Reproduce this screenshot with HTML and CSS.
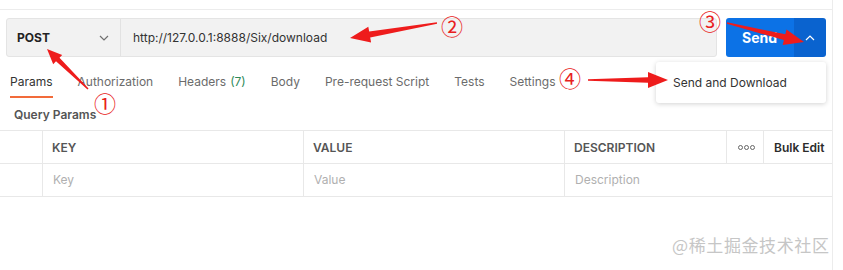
FILE: index.html
```html
<!DOCTYPE html>
<html lang="en">
<head>
    <meta charset="UTF-8">
    <title>Request</title>
    <link rel="stylesheet" href="styles.css">
</head>
<body>

    <div class="pane">
        <!-- top strip -->
        <div class="top-strip"></div>

        <!-- request bar -->
        <div class="request-bar">
            <div class="url-group">
                <div class="method">
                    <span>POST</span>
                    <svg class="chev" width="10" height="6" viewBox="0 0 10 6"><path d="M1 1 L5 5 L9 1" fill="none" stroke="#707070" stroke-width="1.2"/></svg>
                </div>
                <div class="url">http://127.0.0.1:8888/Six/download</div>
            </div>
            <div class="send">
                <span class="send-main">Send</span>
                <span class="send-more">
                    <svg width="10" height="6" viewBox="0 0 10 6"><path d="M1 5 L5 1 L9 5" fill="none" stroke="#fff" stroke-width="1.2"/></svg>
                </span>
            </div>
        </div>

        <!-- tabs -->
        <div class="tabs">
            <span class="tab active">Params</span>
            <span class="tab">Authorization</span>
            <span class="tab">Headers <em>(7)</em></span>
            <span class="tab">Body</span>
            <span class="tab">Pre-request Script</span>
            <span class="tab">Tests</span>
            <span class="tab">Settings</span>
        </div>

        <div class="section-title">Query Params</div>

        <!-- params table -->
        <div class="table">
            <div class="row head">
                <div class="cell check"></div>
                <div class="cell">KEY</div>
                <div class="cell">VALUE</div>
                <div class="cell">DESCRIPTION</div>
                <div class="cell dots"><i></i><i></i><i></i></div>
                <div class="cell bulk">Bulk Edit</div>
            </div>
            <div class="row body">
                <div class="cell check"></div>
                <div class="cell ph">Key</div>
                <div class="cell ph">Value</div>
                <div class="cell ph">Description</div>
            </div>
        </div>
    </div>

    <!-- send menu -->
    <div class="send-menu">Send and Download</div>

    <!-- annotations -->
    <svg class="marks" width="843" height="270" viewBox="0 0 843 270">
        <polygon points="88.5,88.5 59.5,57.7 62.2,54.9 47,49 53.2,64.2 56,61.3 87.5,89.5" fill="#ee1c1c"/>
        <polygon points="436.9,22.3 369.2,31.6 368.3,26.7 350,38 371.1,42.5 370.2,37.6 437.1,23.7" fill="#ee1c1c"/>
        <polygon points="726.8,23.7 783.9,40.1 782.7,45 804,42 786.5,29.4 785.3,34.3 727.2,22.3" fill="#ee1c1c"/>
        <polygon points="588,79.3 648,77.3 648,72 668,80 648,88 648,82.7 588,80.7" fill="#ee1c1c"/>
    </svg>
    <span class="num n1">①</span>
    <span class="num n2">②</span>
    <span class="num n3">③</span>
    <span class="num n4">④</span>

    <div class="watermark">@稀土掘金技术社区</div>

</body>
</html>
```

FILE: styles.css
```css
body {
    margin: 0;
    padding: 0;
    width: 843px;
    height: 270px;
    overflow: hidden;
    background: #fff;
    font-family: Inter, "Noto Sans", Arial, sans-serif;
    color: #333;
    position: relative;
}

.pane {
    width: 832px;
    height: 270px;
    border-right: 1px solid #ececec;
}

.top-strip {
    height: 9px;
    border-bottom: 1px solid #ececec;
}

/* request bar */
.request-bar {
    display: flex;
    gap: 9px;
    padding: 8px 6px 0 6px;
    height: 39px;
}

.url-group {
    flex: 1;
    display: flex;
    background: #f2f2f2;
    border: 1px solid #e4e4e4;
    border-radius: 3px;
}

.method {
    width: 114px;
    box-sizing: border-box;
    display: flex;
    align-items: center;
    justify-content: space-between;
    padding: 0 11px 0 10px;
    border-right: 1px solid #e2e2e2;
    font-size: 12px;
    font-weight: 700;
    color: #222;
}

.url {
    display: flex;
    align-items: center;
    padding-left: 12px;
    font-size: 12px;
    color: #333;
}

.send {
    width: 100px;
    display: flex;
    border-radius: 3px;
    overflow: hidden;
}

.send-main {
    flex: 1;
    background: #0c72e6;
    color: #fff;
    font-size: 14px;
    font-weight: 700;
    display: flex;
    align-items: center;
    padding-left: 16px;
}

.send-more {
    width: 32px;
    background: #0a63cf;
    display: flex;
    align-items: center;
    justify-content: center;
}

/* tabs */
.tabs {
    display: flex;
    gap: 25px;
    padding: 0 0 0 10px;
    margin-top: 13px;
    height: 28px;
}

.tab {
    font-size: 12px;
    line-height: 14px;
    color: #6b6b6b;
    display: flex;
    align-items: center;
    box-sizing: border-box;
    border-bottom: 2px solid transparent;
    padding-bottom: 2px;
}

.tab.active {
    color: #333;
    border-bottom-color: #f26b3a;
}

.tab em {
    font-style: normal;
    color: #2f8a5a;
    margin-left: 4px;
}

.section-title {
    font-size: 12px;
    font-weight: 600;
    color: #555;
    padding: 9px 0 0 14px;
    height: 23px;
}

/* table */
.table {
    border-top: 1px solid #e8e8e8;
}

.row {
    display: grid;
    height: 32px;
    border-bottom: 1px solid #e8e8e8;
}

.row.head {
    grid-template-columns: 42px 261px 261px 162px 37px 1fr;
}

.row.body {
    grid-template-columns: 42px 261px 261px 1fr;
}

.cell {
    display: flex;
    align-items: center;
    padding-left: 9px;
    font-size: 12px;
    border-left: 1px solid #e8e8e8;
}

.cell.check {
    border-left: none;
}

.head .cell {
    font-weight: 600;
    color: #555;
}

.head .cell.bulk {
    color: #2b2b2b;
    padding-left: 10px;
}

.cell.dots {
    gap: 1px;
    padding-left: 11px;
}

.cell.dots i {
    width: 3px;
    height: 3px;
    border: 1px solid #666;
    border-radius: 50%;
}

.cell.ph {
    color: #b0b0b0;
    padding-left: 10px;
    padding-bottom: 2px;
}

/* menu under send */
.send-menu {
    position: absolute;
    left: 656px;
    top: 62px;
    width: 170px;
    height: 41px;
    box-sizing: border-box;
    padding-left: 17px;
    display: flex;
    align-items: center;
    background: #fff;
    border-radius: 3px;
    box-shadow: 0 1px 5px rgba(0, 0, 0, 0.18);
    font-size: 12px;
    color: #333;
}

/* annotations */
.marks {
    position: absolute;
    left: 0;
    top: 0;
}

.num {
    position: absolute;
    font-family: "Noto Sans CJK SC", "DejaVu Sans", sans-serif;
    font-size: 22px;
    line-height: 16px;
    color: #e82020;
}

.n1 { left: 94px; top: 94px; }
.n2 { left: 441px; top: 17px; }
.n3 { left: 699px; top: 12px; }
.n4 { left: 559px; top: 69px; }

.watermark {
    position: absolute;
    left: 672px;
    top: 232px;
    font-family: "Noto Sans CJK SC", sans-serif;
    font-size: 17px;
    color: #c6c6c6;
    letter-spacing: 0.6px;
}
```
